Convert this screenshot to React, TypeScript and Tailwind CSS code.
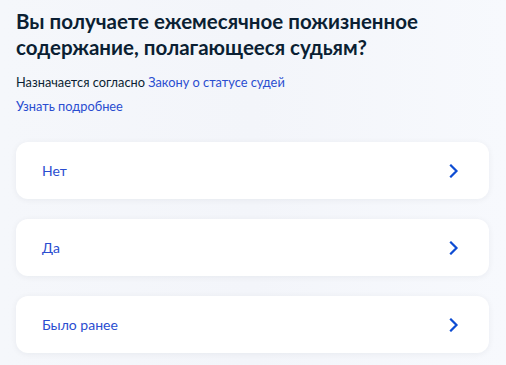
import React from "react";

const Chevron = () => (
  <svg width="10" height="14" viewBox="0 0 10 14" fill="none">
    <path d="M2 1.5L7.5 7L2 12.5" stroke="#0d4cd3" strokeWidth="2.2" strokeLinecap="square" />
  </svg>
);

const Option = ({ label }: { label: string }) => (
  <div className="flex h-[57px] items-center justify-between rounded-xl bg-white pl-[26px] pr-[30px] shadow-[0_1px_6px_rgba(11,31,51,0.06)]">
    <span className="text-[14px] text-[#2a4dd0]">{label}</span>
    <Chevron />
  </div>
);

export default function App() {
  return (
    <div
      className="h-[365px] w-[506px] overflow-hidden bg-[linear-gradient(90deg,#f5f7fb,#f3f5fa_50%,#f7f9fd)] px-4 pt-2 text-[#0b1f33]"
      style={{ fontFamily: "Lato, 'Noto Sans', sans-serif" }}
    >
      <h1 className="text-[20.5px] font-bold leading-[26px]">
        Вы получаете ежемесячное пожизненное
        <br />
        содержание, полагающееся судьям?
      </h1>
      <p className="mt-[12px] text-[12.8px] leading-[20px]">
        Назначается согласно <span className="text-[#2a4dd0]">Закону о статусе судей</span>
      </p>
      <p className="mt-1 text-[12.8px] leading-[20px] text-[#2a4dd0]">Узнать подробнее</p>
      <div className="mr-[1px] mt-[26px] flex flex-col gap-5">
        <Option label="Нет" />
        <Option label="Да" />
        <Option label="Было ранее" />
      </div>
    </div>
  );
}
